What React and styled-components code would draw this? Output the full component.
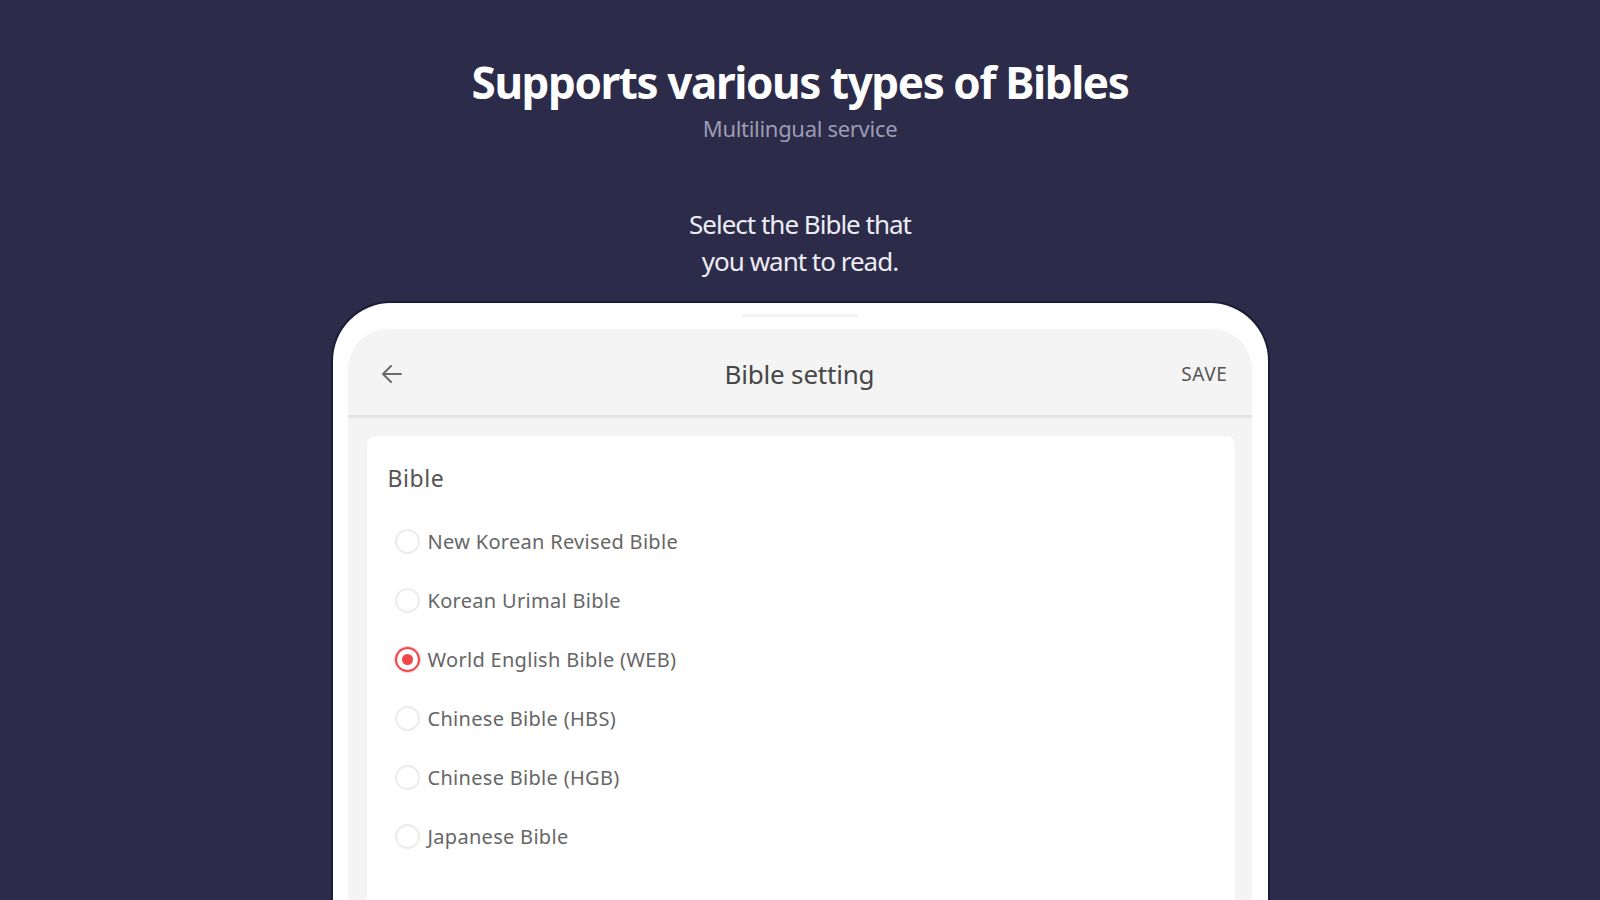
import React, { useState } from 'react';
import styled, { createGlobalStyle } from 'styled-components';

const GlobalStyle = createGlobalStyle`
    html, body {
        margin: 0;
        padding: 0;
        background-color: #2c2b49;
        font-family: "Noto Sans", "Open Sans", sans-serif;
    }
`;

const Page = styled.div`
    display: flex;
    flex-direction: column;
    align-items: center;
    height: 900px;
    overflow: hidden;
    background-color: #2c2b49;
`;

const Headline = styled.h1`
    margin: 53px 0 0;
    font-size: 44px;
    line-height: 58px;
    font-weight: 700;
    letter-spacing: -1.4px;
    color: #ffffff;
`;

const Subline = styled.p`
    margin: 2px 0 0;
    font-size: 22px;
    line-height: 30px;
    letter-spacing: -0.3px;
    color: #9d9cb3;
`;

const Prompt = styled.p`
    margin: 63px 0 0;
    font-size: 26px;
    line-height: 37px;
    letter-spacing: -1px;
    text-align: center;
    color: #ececf2;
`;

const Phone = styled.div`
    margin-top: 23px;
    width: 935px;
    height: 640px;
    flex-shrink: 0;
    box-sizing: border-box;
    padding: 0 16px 0 15px;
    background-color: #ffffff;
    border-radius: 58px 58px 0 0;
    box-shadow: 0 0 0 2px #1d1c36;
    display: flex;
    flex-direction: column;
    align-items: stretch;
`;

const Speaker = styled.div`
    align-self: center;
    width: 116px;
    height: 3px;
    margin: 11px 0 12px;
    border-radius: 2px;
    background-color: #f2f2f2;
`;

const Screen = styled.div`
    flex: 1;
    background-color: #f4f4f4;
    border-radius: 40px 40px 0 0;
    display: flex;
    flex-direction: column;
`;

const AppBar = styled.div`
    height: 88px;
    box-sizing: border-box;
    display: flex;
    align-items: center;
    justify-content: space-between;
    padding: 3px 24px 0 32px;
    border-bottom: 2px solid #e3e3e3;
    box-shadow: 0 2px 3px rgba(0, 0, 0, 0.04);
    position: relative;
`;

const BackButton = styled.button`
    width: 24px;
    height: 24px;
    padding: 0;
    border: none;
    background: none;
    display: flex;
    align-items: center;
    justify-content: center;
`;

const BarTitle = styled.div`
    position: absolute;
    left: 0;
    right: 0;
    text-align: center;
    font-size: 26px;
    color: #474747;
    letter-spacing: -0.2px;
    pointer-events: none;
`;

const SaveButton = styled.button`
    border: none;
    background: none;
    padding: 0;
    font-family: "Noto Sans", sans-serif;
    font-size: 19px;
    letter-spacing: 0.6px;
    color: #555555;
`;

const Card = styled.div`
    margin: 19px 17px 0 19px;
    flex: 1;
    background-color: #ffffff;
    border-radius: 8px 8px 0 0;
    box-shadow: 0 0 2px rgba(0, 0, 0, 0.06);
    padding: 26px 21px 0;
`;

const Label = styled.div`
    font-size: 23px;
    line-height: 32px;
    color: #555555;
    letter-spacing: 0.6px;
`;

const RadioList = styled.div`
    margin-top: 35px;
    display: flex;
    flex-direction: column;
    gap: 35px;
`;

const RadioRow = styled.label`
    display: flex;
    align-items: center;
    gap: 8px;
    height: 24px;
    padding-left: 7px;
    cursor: pointer;
`;

const RadioCircle = styled.span`
    width: 25px;
    height: 25px;
    box-sizing: border-box;
    border-radius: 50%;
    border: 2px solid ${p => (p.$checked ? '#f0454b' : '#ececec')};
    box-shadow: ${p => (p.$checked ? '0 0 0 1px rgba(240, 69, 75, 0.25)' : 'none')};
    display: flex;
    align-items: center;
    justify-content: center;

    &::after {
        content: '';
        width: 11px;
        height: 11px;
        border-radius: 50%;
        background-color: ${p => (p.$checked ? '#f0454b' : 'transparent')};
    }
`;

const RadioText = styled.span`
    font-size: 20px;
    color: #666666;
    letter-spacing: 0.3px;
`;

const bibles = [
    'New Korean Revised Bible',
    'Korean Urimal Bible',
    'World English Bible (WEB)',
    'Chinese Bible (HBS)',
    'Chinese Bible (HGB)',
    'Japanese Bible',
];

const App = () => {
    const [selected, setSelected] = useState(2);

    return (
        <Page>
            <GlobalStyle />
            <Headline>Supports various types of Bibles</Headline>
            <Subline>Multilingual service</Subline>
            <Prompt>
                Select the Bible that
                <br />
                you want to read.
            </Prompt>
            <Phone>
                <Speaker />
                <Screen>
                    <AppBar>
                        <BackButton aria-label="back">
                            <svg width="22" height="20" viewBox="0 0 22 20" fill="none" stroke="#6a6a6a" strokeWidth="2" strokeLinecap="round" strokeLinejoin="round">
                                <path d="M20 10H3" />
                                <path d="M10 2L2 10l8 8" />
                            </svg>
                        </BackButton>
                        <BarTitle>Bible setting</BarTitle>
                        <SaveButton>SAVE</SaveButton>
                    </AppBar>
                    <Card>
                        <Label>Bible</Label>
                        <RadioList>
                            {bibles.map((name, i) => (
                                <RadioRow key={name} onClick={() => setSelected(i)}>
                                    <RadioCircle $checked={selected === i} />
                                    <RadioText>{name}</RadioText>
                                </RadioRow>
                            ))}
                        </RadioList>
                    </Card>
                </Screen>
            </Phone>
        </Page>
    );
};

export default App;
